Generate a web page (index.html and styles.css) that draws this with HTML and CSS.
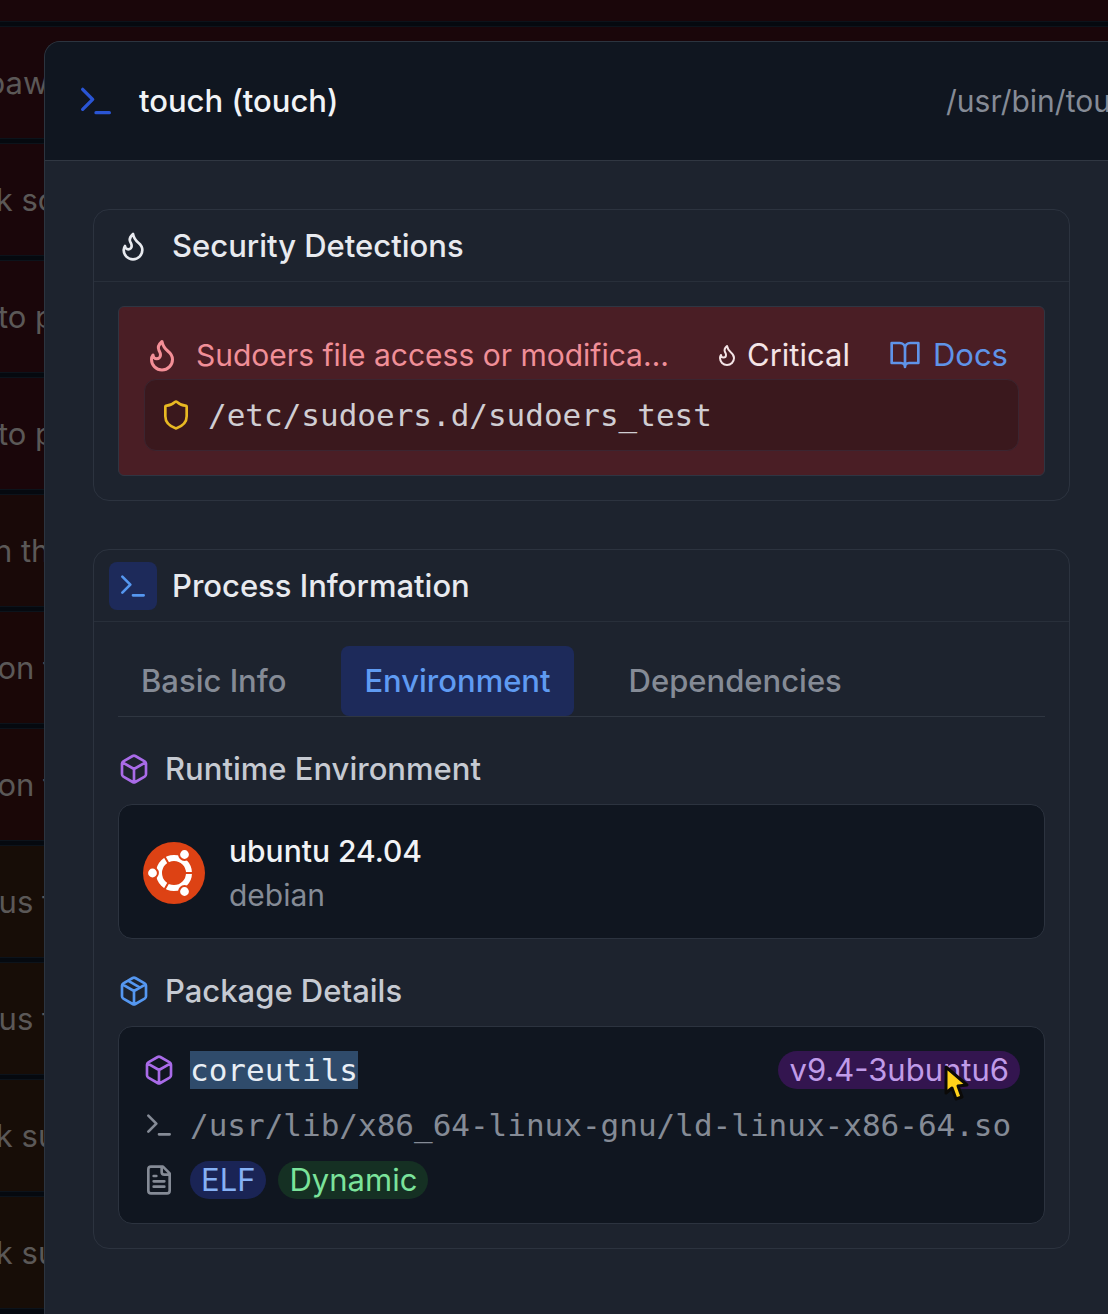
FILE: index.html
```html
<!DOCTYPE html>
<html lang="en">
<head>
<meta charset="utf-8">
<meta name="viewport" content="width=device-width, initial-scale=1">
<title>Process details</title>
<link rel="stylesheet" href="styles.css">
</head>
<body>
<svg class="symbols" aria-hidden="true">
  <symbol id="i-terminal" viewBox="0 0 24 24"><path d="m4 17 6-6-6-6M12 19h8"/></symbol>
  <symbol id="i-flame" viewBox="0 0 24 24"><path d="M8.5 14.5A2.5 2.5 0 0 0 11 12c0-1.38-.5-2-1-3-1.072-2.143-.224-4.054 2-6 .5 2.5 2 4.9 4 6.5 2 1.6 3 3.5 3 5.5a7 7 0 1 1-14 0c0-1.153.433-2.294 1-3a2.5 2.5 0 0 0 2.5 2.5z"/></symbol>
  <symbol id="i-book" viewBox="0 0 24 24"><path d="M2 3h6a4 4 0 0 1 4 4v14a3 3 0 0 0-3-3H2zM22 3h-6a4 4 0 0 0-4 4v14a3 3 0 0 1 3-3h7z"/></symbol>
  <symbol id="i-shield" viewBox="0 0 24 24"><path d="M20 13c0 5-3.5 7.5-7.66 8.95a1 1 0 0 1-.67-.01C7.5 20.5 4 18 4 13V6a1 1 0 0 1 1-1c2 0 4.5-1.2 6.24-2.72a1.17 1.17 0 0 1 1.52 0C14.51 3.81 17 5 19 5a1 1 0 0 1 1 1z"/></symbol>
  <symbol id="i-box" viewBox="0 0 24 24"><path d="M21 8a2 2 0 0 0-1-1.73l-7-4a2 2 0 0 0-2 0l-7 4A2 2 0 0 0 3 8v8a2 2 0 0 0 1 1.73l7 4a2 2 0 0 0 2 0l7-4A2 2 0 0 0 21 16ZM3.3 7l8.7 5 8.7-5M12 22V12"/></symbol>
  <symbol id="i-package" viewBox="0 0 24 24"><path d="M21 8a2 2 0 0 0-1-1.73l-7-4a2 2 0 0 0-2 0l-7 4A2 2 0 0 0 3 8v8a2 2 0 0 0 1 1.73l7 4a2 2 0 0 0 2 0l7-4A2 2 0 0 0 21 16ZM3.3 7l8.7 5 8.7-5M12 22V12M7.5 4.27l9 5.15"/></symbol>
  <symbol id="i-file" viewBox="0 0 24 24"><path d="M15 2H6a2 2 0 0 0-2 2v16a2 2 0 0 0 2 2h12a2 2 0 0 0 2-2V7ZM14 2v4a2 2 0 0 0 2 2h4M10 9H8M16 13H8M16 17H8"/></symbol>
</svg>

<div class="screen">
  <ul class="events">
    <li class="event critical"></li>
    <li class="event critical">paw&nbsp;&nbsp;</li>
    <li class="event critical">k so</li>
    <li class="event critical">to p</li>
    <li class="event critical">to p</li>
    <li class="event high">n th&nbsp;</li>
    <li class="event severe">on f</li>
    <li class="event severe">on f</li>
    <li class="event medium">us f</li>
    <li class="event medium">us f</li>
    <li class="event medium">k su</li>
    <li class="event medium">k su</li>
  </ul>

  <section class="dialog" role="dialog" aria-labelledby="dialog-title">
    <header class="dialog-header">
      <svg class="icon icon-lg blue-strong"><use href="#i-terminal"/></svg>
      <h1 id="dialog-title">touch (touch)</h1>
      <span class="exe-path">/usr/bin/touch</span>
    </header>

    <div class="dialog-body">
      <section class="card">
        <header class="card-header">
          <span class="tile"><svg class="icon"><use href="#i-flame"/></svg></span>
          <h2>Security Detections</h2>
        </header>
        <div class="card-body">
          <article class="alert">
            <div class="alert-row">
              <svg class="icon icon-md rose"><use href="#i-flame"/></svg>
              <span class="alert-title">Sudoers file access or modification</span>
              <span class="severity"><svg class="icon icon-sm"><use href="#i-flame"/></svg>Critical</span>
              <a class="docs" href="#docs"><svg class="icon"><use href="#i-book"/></svg>Docs</a>
            </div>
            <div class="alert-file">
              <svg class="icon yellow"><use href="#i-shield"/></svg>
              <code>/etc/sudoers.d/sudoers_test</code>
            </div>
          </article>
        </div>
      </section>

      <section class="card">
        <header class="card-header">
          <span class="tile tile-blue"><svg class="icon"><use href="#i-terminal"/></svg></span>
          <h2>Process Information</h2>
        </header>
        <div class="card-body">
          <div class="tabs" role="tablist">
            <button class="tab" type="button" role="tab" aria-selected="false">Basic Info</button>
            <button class="tab active" type="button" role="tab" aria-selected="true">Environment</button>
            <button class="tab" type="button" role="tab" aria-selected="false">Dependencies</button>
          </div>

          <h3><svg class="icon purple"><use href="#i-box"/></svg>Runtime Environment</h3>
          <div class="panel runtime">
            <svg class="distro" viewBox="0 0 62 62" aria-hidden="true">
              <circle cx="31" cy="31" r="31" fill="#dd4214"/>
              <circle cx="31" cy="31" r="15" fill="none" stroke="#fff" stroke-width="6"/>
              <path d="M31 31H52M31 31 20.5 12.8M31 31 20.5 49.2" stroke="#dd4214" stroke-width="2"/>
              <circle cx="31" cy="31" r="11" fill="#dd4214"/>
              <g fill="#fff" stroke="#dd4214" stroke-width="2">
                <circle cx="9.5" cy="31" r="5.4"/>
                <circle cx="41.500" cy="12.5" r="5.4"/>
                <circle cx="41.500" cy="49.5" r="5.4"/>
              </g>
            </svg>
            <div>
              <p class="distro-name">ubuntu 24.04</p>
              <p class="distro-family">debian</p>
            </div>
          </div>

          <h3><svg class="icon blue"><use href="#i-package"/></svg>Package Details</h3>
          <div class="panel package">
            <div class="package-row">
              <svg class="icon purple"><use href="#i-box"/></svg>
              <code class="selected">coreutils</code>
              <span class="pill pill-purple">v9.4-3ubuntu6
                <svg class="pointer" viewBox="0 0 26 38" aria-hidden="true"><path d="M2 3v26l6-5 4 11 6-2-4-11 9-1z" fill="#ffd21a" stroke="#0b0a08" stroke-width="3" stroke-linejoin="round"/></svg>
              </span>
            </div>
            <div class="package-row muted">
              <svg class="icon"><use href="#i-terminal"/></svg>
              <code>/usr/lib/x86_64-linux-gnu/ld-linux-x86-64.so</code>
            </div>
            <div class="package-row muted">
              <svg class="icon"><use href="#i-file"/></svg>
              <span class="pills"><span class="pill pill-blue">ELF</span><span class="pill pill-green">Dynamic</span></span>
            </div>
          </div>
        </div>
      </section>
    </div>
  </section>
</div>
</body>
</html>
```
FILE: styles.css
```css
* { box-sizing: border-box; }

body {
  margin: 0;
  background: #05090f;
  color: #e8eaef;
  font: 400 31px/38px Inter, "Liberation Sans", sans-serif;
}

h1, h2, h3, p, ul { margin: 0; padding: 0; font-size: inherit; }
code { font: 400 31px/38px "DejaVu Sans Mono", "Liberation Mono", monospace; }

.symbols { position: absolute; width: 0; height: 0; }

.icon {
  flex: none;
  width: 32px;
  height: 32px;
  fill: none;
  stroke: currentColor;
  stroke-width: 2;
  stroke-linecap: round;
  stroke-linejoin: round;
}
.icon-sm { width: 24px; height: 24px; }
.icon-md { width: 36px; height: 36px; }
.icon-lg { width: 40px; height: 40px; }

.blue { color: #5597f0; }
.blue-strong { color: #2a55d4; }
.purple { color: #a96be8; }
.rose { color: #f48f97; }
.yellow { color: #e8b923; }
.muted { color: #858b96; }

.screen {
  position: relative;
  min-height: 100vh;
  overflow: hidden;
}

/* Dimmed event list behind the dialog */
.events {
  position: absolute;
  inset: 0;
  margin-top: -90px;
  list-style: none;
}
.event {
  display: flex;
  justify-content: center;
  align-items: center;
  height: 111px;
  margin-bottom: 6px;
  padding-right: calc(100% - 52px);
  outline: 1px solid #0c131b;
  color: #5b5857;
  white-space: nowrap;
}
.critical { background: #1a060a; }
.high { background: #190908; }
.severe { background: #1a0707; }
.medium { background: #170d07; }

.dialog {
  position: relative;
  min-height: calc(100vh - 41px);
  margin: 41px 0 0 44px;
  border: 1px solid #2c343f;
  border-width: 1px 0 0 1px;
  border-radius: 16px 0 0 0;
  background: #1d232e;
  overflow: hidden;
}
.dialog-header {
  display: flex;
  align-items: center;
  gap: 23px;
  height: 119px;
  padding-left: 31px;
  border-bottom: 1px solid #303742;
  background: #101620;
}
h1 { flex: 1; color: #f1f3f6; font-weight: 500; }
.exe-path {
  flex: none;
  width: 162px;
  color: #858b96;
  font-size: 30px;
  white-space: nowrap;
  overflow: hidden;
}
.dialog-body {
  display: grid;
  gap: 48px;
  padding: 48px 38px 48px 48px;
}

.card {
  min-width: 0;
  border: 1px solid #2c333f;
  border-radius: 16px;
}
.card-header {
  display: flex;
  align-items: center;
  gap: 15px;
  height: 72px;
  padding: 0 15px;
  border-bottom: 1px solid #282f3a;
}
h2 { font-weight: 500; }
.card-body { padding: 24px; }
.tile {
  display: grid;
  place-items: center;
  width: 48px;
  height: 48px;
  border-radius: 8px;
}
.tile-blue { background: #1d2a5a; color: #5597f0; }

.alert {
  padding: 24px 25px;
  border: 1px solid #2f3542;
  border-radius: 6px;
  background: #4a1e25;
}
.alert-row {
  display: flex;
  align-items: center;
  height: 48px;
}
.alert-title {
  flex: 1;
  min-width: 0;
  margin: 0 40px 0 16px;
  color: #f08f98;
  font-size: 30px;
  white-space: nowrap;
  overflow: hidden;
  text-overflow: ellipsis;
}
.severity {
  display: flex;
  align-items: center;
  gap: 8px;
  margin-right: 39px;
  color: #f4e4e6;
}
.docs {
  display: flex;
  align-items: center;
  gap: 12px;
  margin-right: 11px;
  color: #5f93e8;
  text-decoration: none;
}
.alert-file {
  display: flex;
  align-items: center;
  gap: 16px;
  height: 72px;
  padding: 0 15px;
  border: 1px solid #3b2530;
  border-radius: 12px;
  background: #3a181d;
  color: #d0cdd2;
}

.tabs {
  display: flex;
  gap: 32px;
  border-bottom: 1px solid #2f3641;
}
.tab {
  height: 70px;
  padding: 0 23px;
  border: 0;
  border-radius: 8px;
  background: none;
  color: #858b96;
  font: inherit;
  font-weight: 500;
}
.tab.active { background: #1d2a5a; color: #5f9bf2; }

h3 {
  display: flex;
  align-items: center;
  gap: 15px;
  height: 38px;
  margin: 33px 0 16px;
  color: #c6cad2;
  font-weight: 500;
}
.panel {
  border: 1px solid #2c333f;
  border-radius: 14px;
  background: #101620;
}
.runtime {
  display: flex;
  align-items: center;
  gap: 24px;
  padding: 24px 24px 21px;
  line-height: 44px;
}
.distro { width: 62px; height: 62px; }
.distro-name { color: #f1f3f6; font-size: 30px; font-weight: 500; }
.distro-family { color: #858b96; font-size: 30px; }

.package {
  display: grid;
  gap: 17px;
  padding: 24px;
}
.package-row {
  display: flex;
  align-items: center;
  gap: 15px;
  height: 38px;
}
.selected { background: #2f4b6b; color: #e8eef5; }
.pills { display: flex; gap: 12px; }
.pill {
  padding: 0 11px;
  border-radius: 19px;
}
.pill-purple {
  position: relative;
  margin-left: auto;
  background: #33154f;
  color: #c09be8;
}
.pill-blue { background: #1a2455; color: #86b1f5; }
.pill-green { background: #153023; color: #7be39b; }
.pointer {
  position: absolute;
  top: 13px;
  right: 50px;
  width: 26px;
  height: 38px;
}
```
